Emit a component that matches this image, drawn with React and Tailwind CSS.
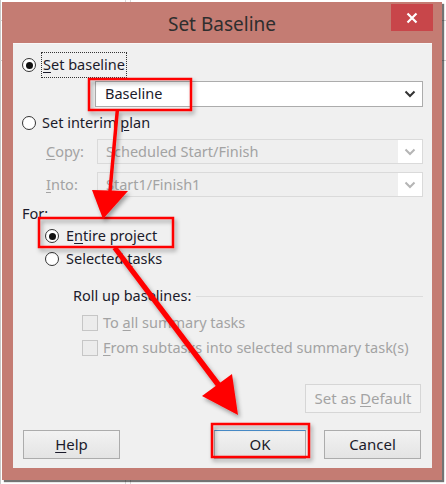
import React from "react";

const font = { fontFamily: '"Noto Sans", "Open Sans", "Liberation Sans", sans-serif' };

function Radio({ checked }) {
  return (
    <span className="w-[14px] h-[14px] rounded-full border border-[#333] bg-white flex items-center justify-center shrink-0">
      {checked && <span className="w-[7px] h-[7px] rounded-full bg-[#111]" />}
    </span>
  );
}

function Check() {
  return <span className="w-[16px] h-[16px] border border-[#c6c6c6] bg-[#ececec] shrink-0" />;
}

function Chevron({ color }) {
  return (
    <svg width="12" height="8" viewBox="0 0 12 8">
      <path d="M1.5 1.5 L6 6 L10.5 1.5" fill="none" stroke={color} strokeWidth="2" />
    </svg>
  );
}

function U({ children }) {
  return <span className="underline underline-offset-2">{children}</span>;
}

function Button({ children, className = "", disabled }) {
  return (
    <div
      className={`h-[29px] flex items-center justify-center border text-[15px] ${
        disabled
          ? "border-[#d6d6d6] bg-[#f3f3f3] text-[#a3a3a3]"
          : "border-[#acacac] bg-gradient-to-b from-[#f2f2f2] to-[#e4e4e4] text-[#1b1b2b]"
      } ${className}`}
    >
      {children}
    </div>
  );
}

export default function App() {
  return (
    <div className="relative w-[446px] h-[484px] bg-white overflow-hidden" style={font}>
      {/* faint background lines */}
      <div className="absolute left-0 top-0 w-[1px] h-[484px] bg-[#c8c8c8]" />
      <div className="absolute left-[125px] top-0 w-[1px] h-[484px] bg-[#d8d8d8]" />
      <div className="absolute left-[130px] top-0 w-[1px] h-[484px] bg-[#d8d8d8]" />
      <div className="absolute left-0 top-[20px] w-[446px] h-[1px] bg-[#d0d0d0]" />
      <div className="absolute left-0 top-[60px] w-[446px] h-[1px] bg-[#d0d0d0]" />

      <div className="relative pt-[2px] pl-[2px]">
        <div className="relative w-[440px] h-[478px] bg-[#c47c73] shadow-[2px_2px_1px_rgba(0,0,0,0.55)]">
          {/* title bar */}
          <div className="relative h-[41px] flex items-center justify-center pt-[3px]">
            <span className="text-[19px] text-[#2e2e2e]">Set Baseline</span>
            <div className="absolute right-[9px] top-[2px] w-[42px] h-[27px] bg-[#c8464a] flex items-center justify-center">
              <svg width="12" height="12" viewBox="0 0 12 12">
                <path d="M1.5 1.5 L10.5 10.5 M10.5 1.5 L1.5 10.5" stroke="#fff" strokeWidth="2.2" />
              </svg>
            </div>
          </div>

          {/* client area */}
          <div className="ml-[11px] w-[419px] h-[425px] bg-[#f0f0f0] border-t border-[#f8f8f8] px-[9px] pt-[5px] flex flex-col text-[14.5px] text-[#1b1b2b]">
            <div className="h-[32px] flex items-center">
              <Radio checked />
              <span className="ml-[5px] h-[26px] px-[1px] flex items-center border border-dotted border-[#333]">
                <U>S</U>et baseline
              </span>
            </div>

            <div className="ml-[73px] w-[328px] h-[26px] bg-white border border-[#acacac] flex items-center justify-between pl-[9px] pr-[6px]">
              <span>Baseline</span>
              <Chevron color="#333" />
            </div>

            <div className="h-[32px] flex items-center">
              <Radio />
              <span className="ml-[6px]">
                Set interim <U>p</U>lan
              </span>
            </div>

            <div className="h-[25px] flex items-center text-[#a3a3a3]">
              <span className="ml-[24px] w-[51px]">
                <U>C</U>opy:
              </span>
              <div className="w-[326px] h-[25px] border border-[#dadada] bg-[#efefef] flex items-center justify-between pl-[8px]">
                <span>Scheduled Start/Finish</span>
                <span className="w-[24px] h-full bg-white flex items-center justify-center">
                  <Chevron color="#b5b5b5" />
                </span>
              </div>
            </div>

            <div className="mt-[8px] h-[25px] flex items-center text-[#a3a3a3]">
              <span className="ml-[24px] w-[51px]">
                <U>I</U>nto:
              </span>
              <div className="w-[326px] h-[25px] border border-[#dadada] bg-[#efefef] flex items-center justify-between pl-[8px]">
                <span>Start1/Finish1</span>
                <span className="w-[24px] h-full bg-white flex items-center justify-center">
                  <Chevron color="#b5b5b5" />
                </span>
              </div>
            </div>

            <div className="mt-[6px] h-[22px] flex items-center">For:</div>

            <div className="h-[22px] flex items-center pl-[23px]">
              <Radio checked />
              <span className="ml-[7px]">
                E<U>n</U>tire project
              </span>
            </div>

            <div className="h-[24px] flex items-center pl-[23px]">
              <Radio />
              <span className="ml-[7px]">
                Selected <U>t</U>asks
              </span>
            </div>

            <div className="mt-[13px] h-[24px] flex items-center pl-[51px]">
              <span>Roll up baselines:</span>
              <span className="ml-[5px] flex-1 h-[1px] bg-[#dcdcdc]" />
            </div>

            <div className="mt-[3px] h-[24px] flex items-center pl-[60px] text-[#a3a3a3]">
              <Check />
              <span className="ml-[5px]">
                To <U>a</U>ll summary tasks
              </span>
            </div>

            <div className="mt-[1px] h-[24px] flex items-center pl-[60px] text-[#a3a3a3]">
              <Check />
              <span className="ml-[5px]">
                <U>F</U>rom subtasks into selected summary task(s)
              </span>
            </div>

            <div className="mt-[24px] flex justify-end mr-[2px]">
              <Button disabled className="w-[116px] h-[28px]">
                Set as&nbsp;<U>D</U>efault
              </Button>
            </div>

            <div className="mt-[17px] flex items-center mr-[2px]">
              <Button className="ml-[1px] w-[97px]">
                <U>H</U>elp
              </Button>
              <Button className="ml-[94px] w-[92px] border-t-[#4a90d0]">OK</Button>
              <Button className="ml-[18px] w-[97px]">Cancel</Button>
            </div>
          </div>
        </div>
      </div>

      {/* annotations */}
      <svg className="absolute left-0 top-0" width="446" height="484" viewBox="0 0 446 484">
        <defs>
          <filter id="sh" x="-20%" y="-20%" width="140%" height="140%">
            <feDropShadow dx="2" dy="3" stdDeviation="2" floodColor="#000" floodOpacity="0.35" />
          </filter>
        </defs>
        <g filter="url(#sh)" fill="none" stroke="#ff0000" strokeWidth="2.5">
          <rect x="89" y="79" width="102" height="31" />
          <rect x="39" y="218" width="134" height="29" />
          <rect x="212" y="424" width="97" height="33" />
        </g>
        <g filter="url(#sh)" fill="#ff0000" stroke="none">
          <path d="M115.5 111 L119 111 L111.5 194 L108 194 Z" />
          <path d="M92 190 L128 191 L103 219 Z" />
          <path d="M112.5 249 L117 246.5 L222.5 385.5 L218 389 Z" />
          <path d="M202 396 L232 374 L238 415 Z" />
        </g>
      </svg>
    </div>
  );
}
